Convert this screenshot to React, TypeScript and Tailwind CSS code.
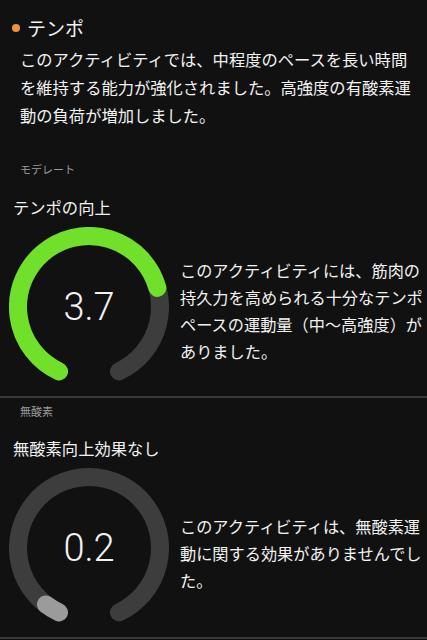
import React from "react";

const START = 25;
const SWEEP = 310;
const MAX = 5;

function pt(cx: number, cy: number, r: number, deg: number) {
  const a = (deg * Math.PI) / 180;
  return [cx - r * Math.sin(a), cy + r * Math.cos(a)];
}

function arc(cx: number, cy: number, r: number, from: number, to: number) {
  const [x1, y1] = pt(cx, cy, r, from);
  const [x2, y2] = pt(cx, cy, r, to);
  const large = to - from > 180 ? 1 : 0;
  return `M ${x1} ${y1} A ${r} ${r} 0 ${large} 1 ${x2} ${y2}`;
}

function Gauge({ value, color }: { value: number; color: string }) {
  const end = START + (value / MAX) * SWEEP;
  return (
    <div className="relative w-[160px] h-[160px] shrink-0">
      <svg width="160" height="160" viewBox="0 0 160 160">
        <path d={arc(80, 80, 71, START, START + SWEEP)} fill="none" stroke="#3d3d3d" strokeWidth="18" strokeLinecap="round" />
        <path d={arc(80, 80, 71, START, end)} fill="none" stroke={color} strokeWidth="18" strokeLinecap="round" />
      </svg>
      <div className="absolute inset-0 flex items-center justify-center font-['Roboto',sans-serif] font-light text-[38px] text-[#f2f2f2]">
        {value.toFixed(1)}
      </div>
    </div>
  );
}

function Lines({ lines, className }: { lines: string[]; className?: string }) {
  return (
    <div className={className}>
      {lines.map((l, i) => (
        <div key={i} className="whitespace-nowrap">{l}</div>
      ))}
    </div>
  );
}

export default function App() {
  return (
    <div className="w-[427px] h-[640px] overflow-hidden bg-[#111111] text-[#f2f2f2] font-['Noto_Sans_CJK_JP','Noto_Sans',sans-serif]">
      <section className="pt-[14px]">
        <div className="flex items-center h-[28px] pl-[12px] gap-[7px]">
          <span className="w-[8px] h-[8px] rounded-full bg-[#f39433]" />
          <h2 className="text-[19px] leading-[28px]">テンポ</h2>
        </div>
        <Lines
          className="mt-[3px] pl-[20px] text-[16.3px] leading-[28px]"
          lines={[
            "このアクティビティでは、中程度のペースを長い時間",
            "を維持する能力が強化されました。高強度の有酸素運",
            "動の負荷が増加しました。",
          ]}
        />
      </section>

      <section>
        <div className="mt-[32px] pl-[20px] text-[11px] leading-[16px] text-[#9a9a9a]">モデレート</div>
        <div className="mt-[18px] pl-[13px] text-[16.3px] leading-[24px]">テンポの向上</div>
        <div className="mt-[8px] pl-[9px] flex items-start gap-[11px]">
          <Gauge value={3.7} color="#70e02a" />
          <Lines
            className="mt-[30px] text-[16.2px] leading-[27px]"
            lines={[
              "このアクティビティには、筋肉の",
              "持久力を高められる十分なテンポ",
              "ペースの運動量（中〜高強度）が",
              "ありました。",
            ]}
          />
        </div>
      </section>

      <div className="mt-[9px] h-[2px] bg-[#3a3a3a]" />

      <section>
        <div className="mt-[5px] pl-[20px] text-[11px] leading-[16px] text-[#9a9a9a]">無酸素</div>
        <div className="mt-[17px] pl-[13px] text-[16.3px] leading-[24px]">無酸素向上効果なし</div>
        <div className="mt-[8px] pl-[9px] flex items-start gap-[11px]">
          <Gauge value={0.2} color="#9b9b9b" />
          <Lines
            className="mt-[45px] text-[16.2px] leading-[27px]"
            lines={[
              "このアクティビティは、無酸素運",
              "動に関する効果がありませんでし",
              "た。",
            ]}
          />
        </div>
      </section>

      <div className="mt-[9px] h-[2px] bg-[#3a3a3a]" />
    </div>
  );
}
